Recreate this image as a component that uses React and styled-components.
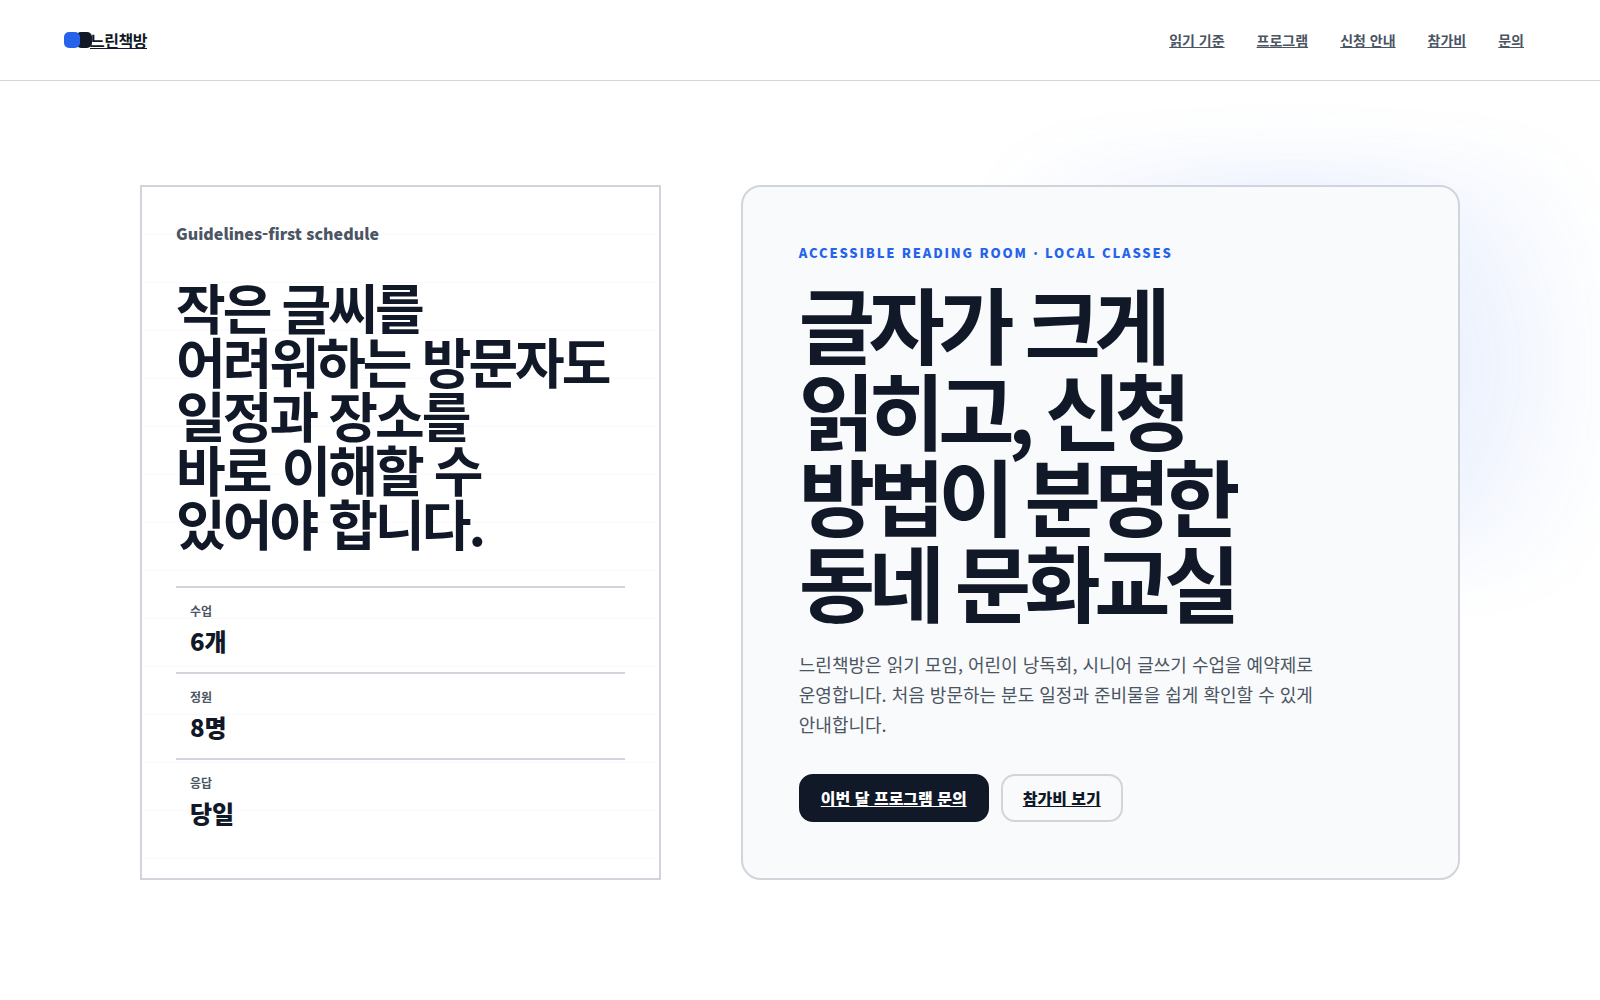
import React from "react";
import styled, { createGlobalStyle } from "styled-components";

const ink = "#111827";
const muted = "#4b5563";
const line = "#d1d5db";
const blue = "#2563eb";

const GlobalStyle = createGlobalStyle`
  *, *::before, *::after { box-sizing: border-box; }
  body {
    margin: 0;
    background: #ffffff;
    color: ${ink};
    font-family: "Noto Sans CJK KR", "Noto Sans KR", sans-serif;
    font-size: 16px;
    text-rendering: optimizeLegibility;
    word-break: keep-all;
  }
  h1, h2, p, dl, dd { margin: 0; }
`;

const Header = styled.header`
  display: flex;
  align-items: center;
  justify-content: space-between;
  min-height: 81px;
  padding: 0 64px;
  border-bottom: 1px solid ${line};
  background: #ffffff;
`;

const Brand = styled.a`
  display: inline-flex;
  align-items: center;
  gap: 10px;
  color: ${ink};
  font-size: 16px;
  font-weight: 700;
  letter-spacing: -0.03em;
`;

const BrandMark = styled.span`
  width: 16px;
  height: 16px;
  border-radius: 5px;
  background: ${blue};
  box-shadow: 12px 0 0 ${ink};
`;

const Nav = styled.nav`
  display: flex;
  gap: 8px;
`;

const NavLink = styled.a`
  padding: 8px 12px;
  color: ${muted};
  font-size: 14px;
  font-weight: 700;
`;

const Hero = styled.main`
  position: relative;
  overflow: hidden;
  padding: 104px 64px;
`;

const Glow = styled.div`
  position: absolute;
  top: 78px;
  right: 10px;
  width: 600px;
  height: 412px;
  background: radial-gradient(circle 340px, rgba(37, 99, 235, 0.17), rgba(37, 99, 235, 0));
  filter: blur(30px);
`;

const Columns = styled.div`
  position: relative;
  display: grid;
  grid-template-columns: 42fr 58fr;
  gap: 80px;
  max-width: 1320px;
  margin: 0 auto;
`;

const Schedule = styled.aside`
  display: flex;
  flex-direction: column;
  padding: 34px;
  border: 2px solid ${line};
  background: repeating-linear-gradient(#ffffff 0 47px, #f9fafb 47px 48px);
`;

const ScheduleLabel = styled.p`
  color: ${muted};
  font-size: 16px;
  font-weight: 900;
  line-height: 24px;
`;

const ScheduleTitle = styled.h2`
  margin-top: 35px;
  font-size: 54px;
  font-weight: 700;
  line-height: 54px;
  letter-spacing: -0.055em;
`;

const Facts = styled.dl`
  display: grid;
  margin-top: auto;
`;

const Fact = styled.div`
  padding: 14px;
  border-top: 2px solid ${line};
`;

const FactName = styled.dt`
  color: ${muted};
  font-size: 12px;
  font-weight: 700;
  line-height: 18px;
`;

const FactValue = styled.dd`
  padding-top: 4px;
  font-size: 24px;
  font-weight: 900;
  line-height: 34px;
`;

const Intro = styled.section`
  padding: 56px;
  border: 2px solid ${line};
  border-radius: 20px;
  background: #f9fafb;
`;

const Eyebrow = styled.p`
  color: ${blue};
  font-size: 13px;
  font-weight: 900;
  line-height: 20px;
  letter-spacing: 0.14em;
  text-transform: uppercase;
`;

const Title = styled.h1`
  margin-top: 16px;
  font-size: 83px;
  font-weight: 700;
  line-height: 86px;
  letter-spacing: -0.08em;
`;

const Lead = styled.p`
  max-width: 560px;
  margin-top: 26px;
  color: ${muted};
  font-size: 18px;
  line-height: 30px;
`;

const Actions = styled.div`
  display: flex;
  flex-wrap: wrap;
  gap: 12px;
  margin-top: 35px;
`;

const Action = styled.a`
  display: inline-flex;
  align-items: center;
  min-height: 48px;
  padding: 0 20px;
  border: 2px solid ${(p) => (p.$primary ? ink : line)};
  border-radius: 14px;
  background: ${(p) => (p.$primary ? ink : "transparent")};
  color: ${(p) => (p.$primary ? "#ffffff" : ink)};
  font-size: 16px;
  font-weight: 900;
`;

const links = [
  ["읽기 기준", "#guidelines"],
  ["프로그램", "#programs"],
  ["신청 안내", "#apply"],
  ["참가비", "#fees"],
  ["문의", "#contact"],
];

const facts = [
  ["수업", "6개"],
  ["정원", "8명"],
  ["응답", "당일"],
];

export default function App() {
  return (
    <div lang="ko">
      <GlobalStyle />
      <Header>
        <Brand href="#top">
          <BrandMark aria-hidden="true" />
          <span>느린책방</span>
        </Brand>
        <Nav aria-label="주요 메뉴">
          {links.map(([text, href]) => (
            <NavLink key={href} href={href}>{text}</NavLink>
          ))}
        </Nav>
      </Header>
      <Hero id="top">
        <Glow aria-hidden="true" />
        <Columns>
          <Schedule>
            <ScheduleLabel>Guidelines-first schedule</ScheduleLabel>
            <ScheduleTitle>
              작은 글씨를<br />어려워하는 방문자도<br />일정과 장소를<br />바로 이해할 수<br />있어야 합니다.
            </ScheduleTitle>
            <Facts>
              {facts.map(([name, value]) => (
                <Fact key={name}>
                  <FactName>{name}</FactName>
                  <FactValue>{value}</FactValue>
                </Fact>
              ))}
            </Facts>
          </Schedule>
          <Intro>
            <Eyebrow>Accessible reading room · local classes</Eyebrow>
            <Title>
              글자가 크게<br />읽히고, 신청<br />방법이 분명한<br />동네 문화교실
            </Title>
            <Lead>
              느린책방은 읽기 모임, 어린이 낭독회, 시니어 글쓰기 수업을 예약제로 운영합니다. 처음 방문하는 분도 일정과 준비물을 쉽게 확인할 수 있게 안내합니다.
            </Lead>
            <Actions>
              <Action href="#contact" $primary>이번 달 프로그램 문의</Action>
              <Action href="#fees">참가비 보기</Action>
            </Actions>
          </Intro>
        </Columns>
      </Hero>
    </div>
  );
}
